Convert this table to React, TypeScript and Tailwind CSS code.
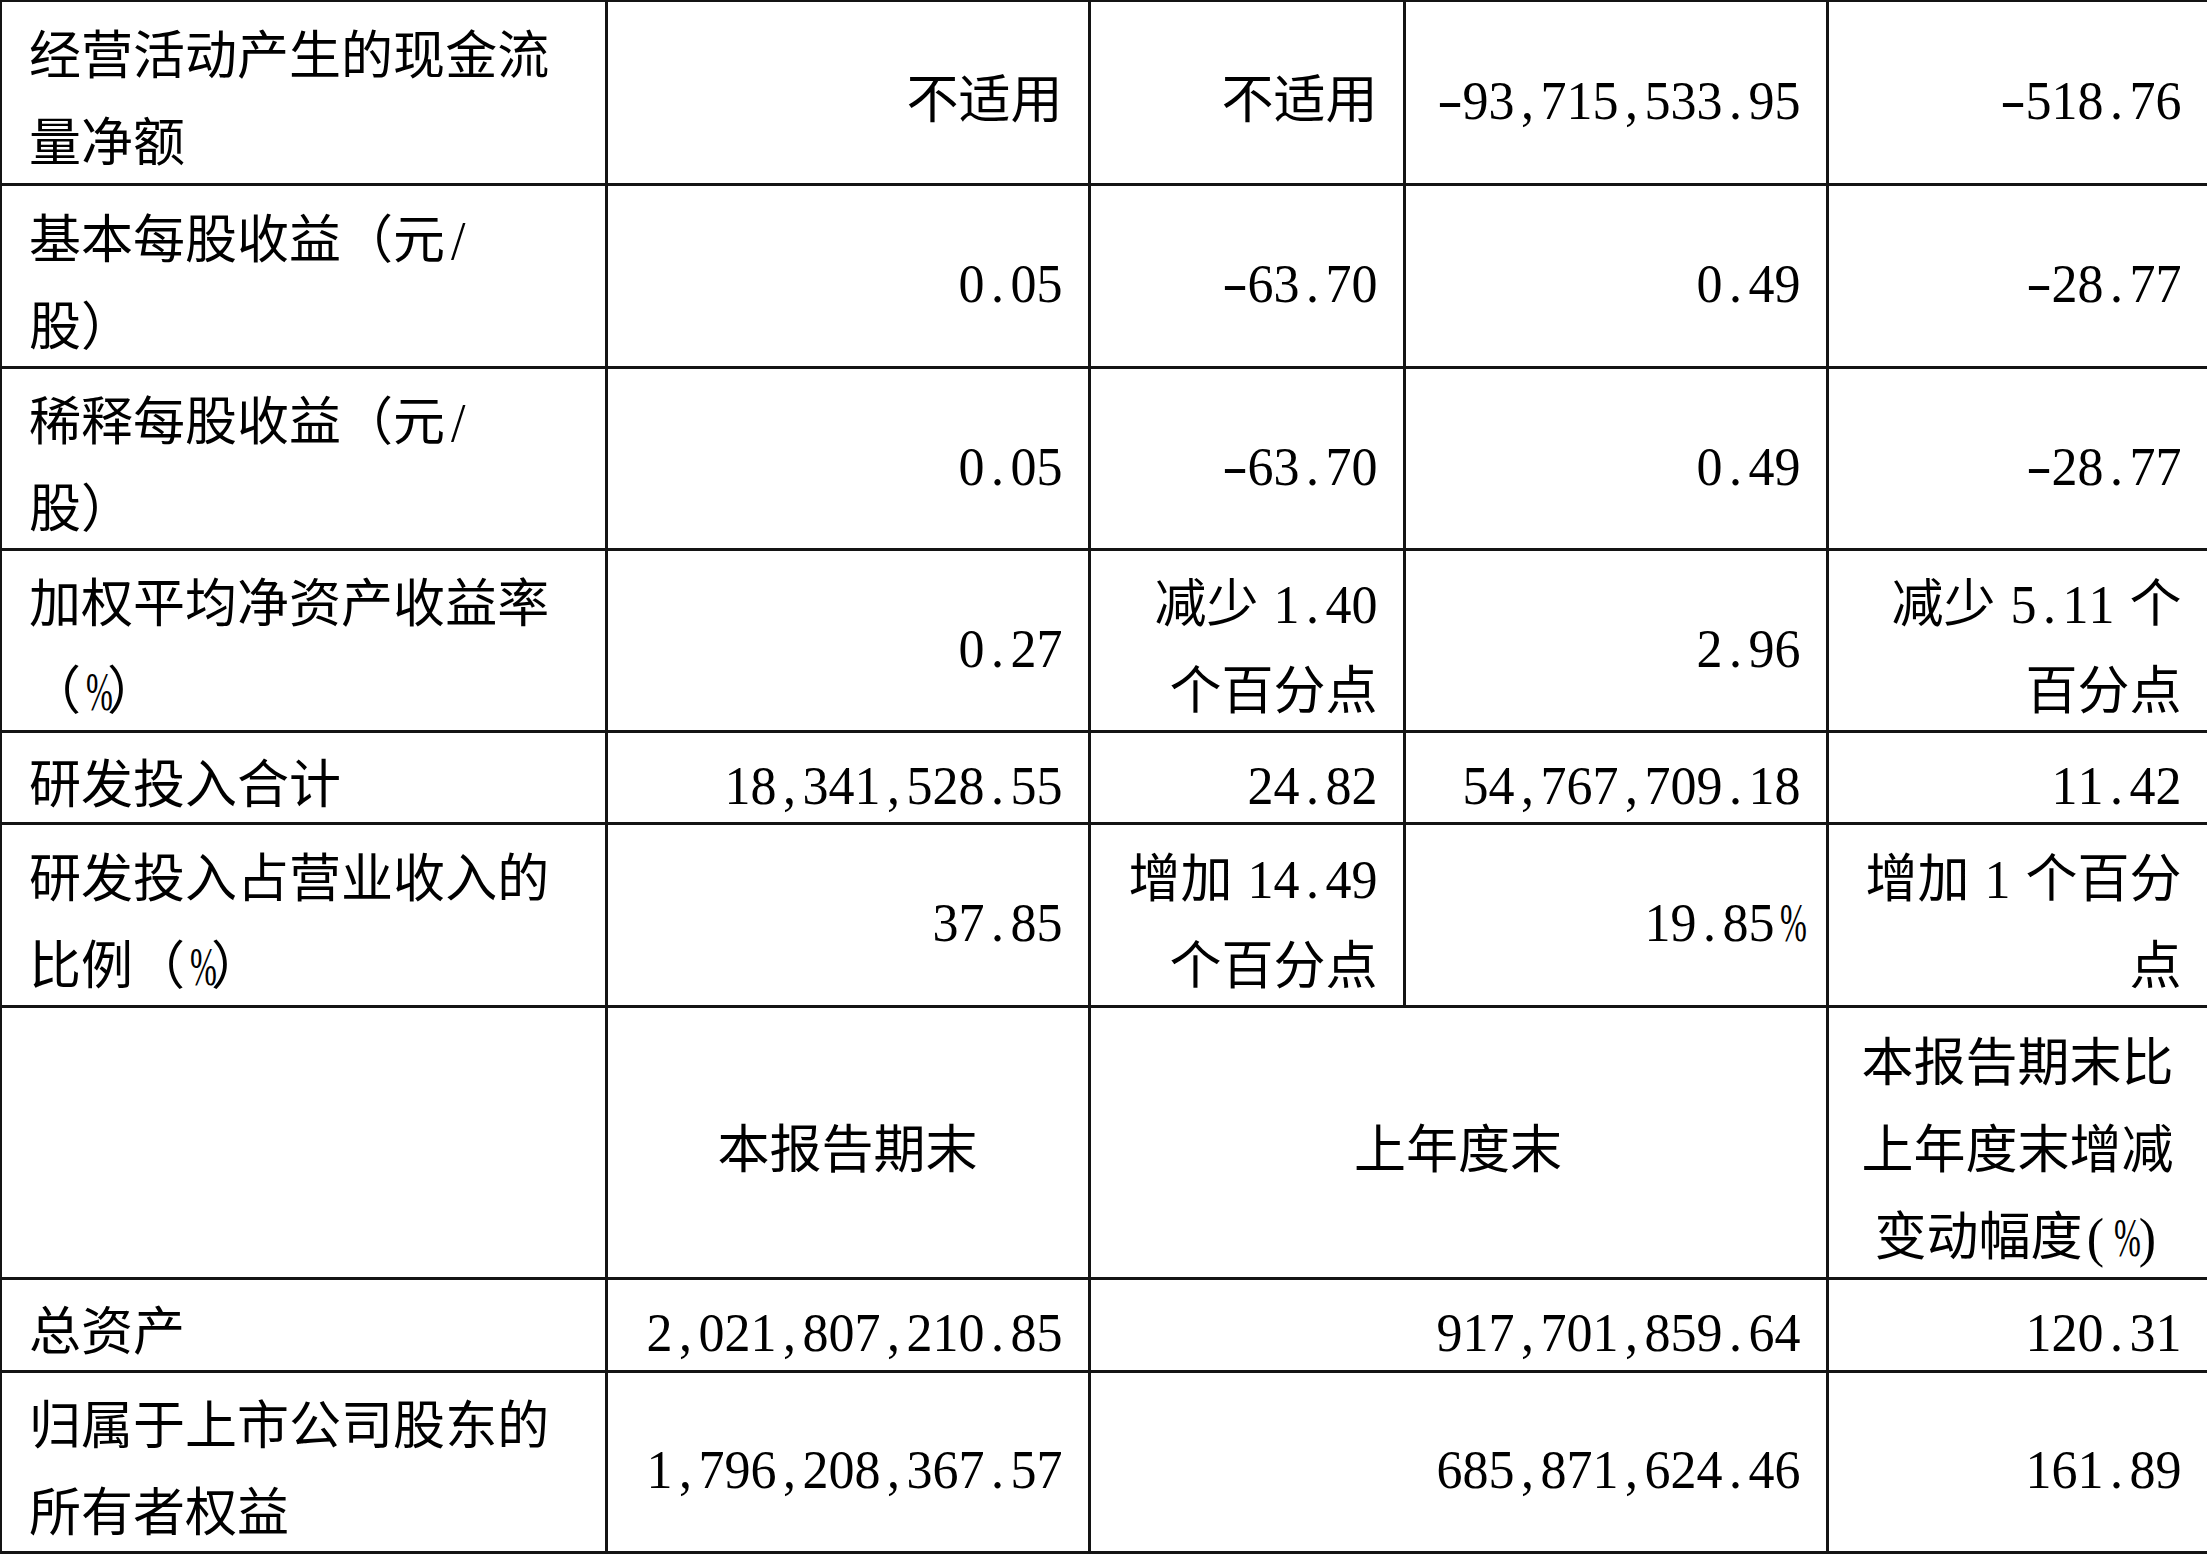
import { Fragment } from "react";

// Financial summary table (continued page) rendered in a Song-like layout:
// every ASCII char takes half an em, CJK chars a full em.

type Align = "left" | "right" | "center";

interface CellDef {
  text: string;
  align?: Align;
  span?: number;
}

interface RowDef {
  h: string;
  cells: CellDef[];
}

const rows: RowDef[] = [
  {
    h: "h-[183px]",
    cells: [
      { text: "经营活动产生的现金流\n量净额", align: "left" },
      { text: "不适用" },
      { text: "不适用" },
      { text: "-93,715,533.95" },
      { text: "-518.76" },
    ],
  },
  {
    h: "h-[183px]",
    cells: [
      { text: "基本每股收益（元/\n股）", align: "left" },
      { text: "0.05" },
      { text: "-63.70" },
      { text: "0.49" },
      { text: "-28.77" },
    ],
  },
  {
    h: "h-[182px]",
    cells: [
      { text: "稀释每股收益（元/\n股）", align: "left" },
      { text: "0.05" },
      { text: "-63.70" },
      { text: "0.49" },
      { text: "-28.77" },
    ],
  },
  {
    h: "h-[182px]",
    cells: [
      { text: "加权平均净资产收益率\n（%）", align: "left" },
      { text: "0.27" },
      { text: "减少 1.40\n个百分点" },
      { text: "2.96" },
      { text: "减少 5.11 个\n百分点" },
    ],
  },
  {
    h: "h-[92px]",
    cells: [
      { text: "研发投入合计", align: "left" },
      { text: "18,341,528.55" },
      { text: "24.82" },
      { text: "54,767,709.18" },
      { text: "11.42" },
    ],
  },
  {
    h: "h-[183px]",
    cells: [
      { text: "研发投入占营业收入的\n比例（%）", align: "left" },
      { text: "37.85" },
      { text: "增加 14.49\n个百分点" },
      { text: "19.85%" },
      { text: "增加 1 个百分\n点" },
    ],
  },
  {
    h: "h-[272px]",
    cells: [
      { text: "", align: "left" },
      { text: "本报告期末", align: "center" },
      { text: "上年度末", align: "center", span: 2 },
      { text: "本报告期末比\n上年度末增减\n变动幅度(%)", align: "center" },
    ],
  },
  {
    h: "h-[93px]",
    cells: [
      { text: "总资产", align: "left" },
      { text: "2,021,807,210.85" },
      { text: "917,701,859.64", span: 2 },
      { text: "120.31" },
    ],
  },
  {
    h: "h-[181px]",
    cells: [
      { text: "归属于上市公司股东的\n所有者权益", align: "left" },
      { text: "1,796,208,367.57" },
      { text: "685,871,624.46", span: 2 },
      { text: "161.89" },
    ],
  },
];

// Half-width boxes for ASCII characters
function Glyph({ ch }: { ch: string }) {
  if (ch === " ") return <span className="inline-block w-[15px]">{"\u00a0"}</span>;
  if (ch === "%")
    return <span className="inline-block w-[26px] text-center scale-x-[0.62] scale-y-[1.07]">%</span>;
  if (ch === "-")
    return <span className="inline-block w-[26px] text-center scale-x-[1.5]">-</span>;
  return <span className="inline-block w-[26px] text-center scale-y-[1.07]">{ch}</span>;
}

function Line({ s }: { s: string }) {
  return (
    <div className="h-[87px] leading-[87px]">
      {Array.from(s).map((ch, i) =>
        ch.charCodeAt(0) < 0x2e80 ? (
          <Glyph key={i} ch={ch} />
        ) : (
          <Fragment key={i}>{ch}</Fragment>
        )
      )}
    </div>
  );
}

const alignClass: Record<Align, string> = {
  left: "text-left pl-[27px] pr-[10px]",
  right: "text-right pr-[25px] pl-[10px]",
  center: "text-center px-[10px]",
};

export default function App() {
  return (
    <div
      className="w-[2207px] h-[1554px] overflow-hidden bg-white text-black"
      style={{ fontFamily: '"Liberation Serif", "Noto Sans CJK SC", serif' }}
    >
      <table className="table-fixed border-collapse w-[2207px]">
        <colgroup>
          <col className="w-[605px]" />
          <col className="w-[483px]" />
          <col className="w-[315px]" />
          <col className="w-[423px]" />
          <col className="w-[381px]" />
        </colgroup>
        <tbody>
          {rows.map((row, ri) => (
            <tr key={ri}>
              {row.cells.map((c, ci) => (
                <td
                  key={ci}
                  colSpan={c.span}
                  className={[
                    "border-[3px] border-[#141414] align-middle p-0 text-[52px] leading-[87px] whitespace-nowrap font-normal",
                    ci === 0 ? `${row.h} border-l-2` : "",
                    ri === 0 ? "border-t-2" : "",
                    alignClass[c.align ?? "right"],
                  ].join(" ")}
                >
                  <div className="translate-y-[8px]">
                    {c.text.split("\n").map((l, li) => (
                      <Line key={li} s={l} />
                    ))}
                  </div>
                </td>
              ))}
            </tr>
          ))}
        </tbody>
      </table>
    </div>
  );
}
